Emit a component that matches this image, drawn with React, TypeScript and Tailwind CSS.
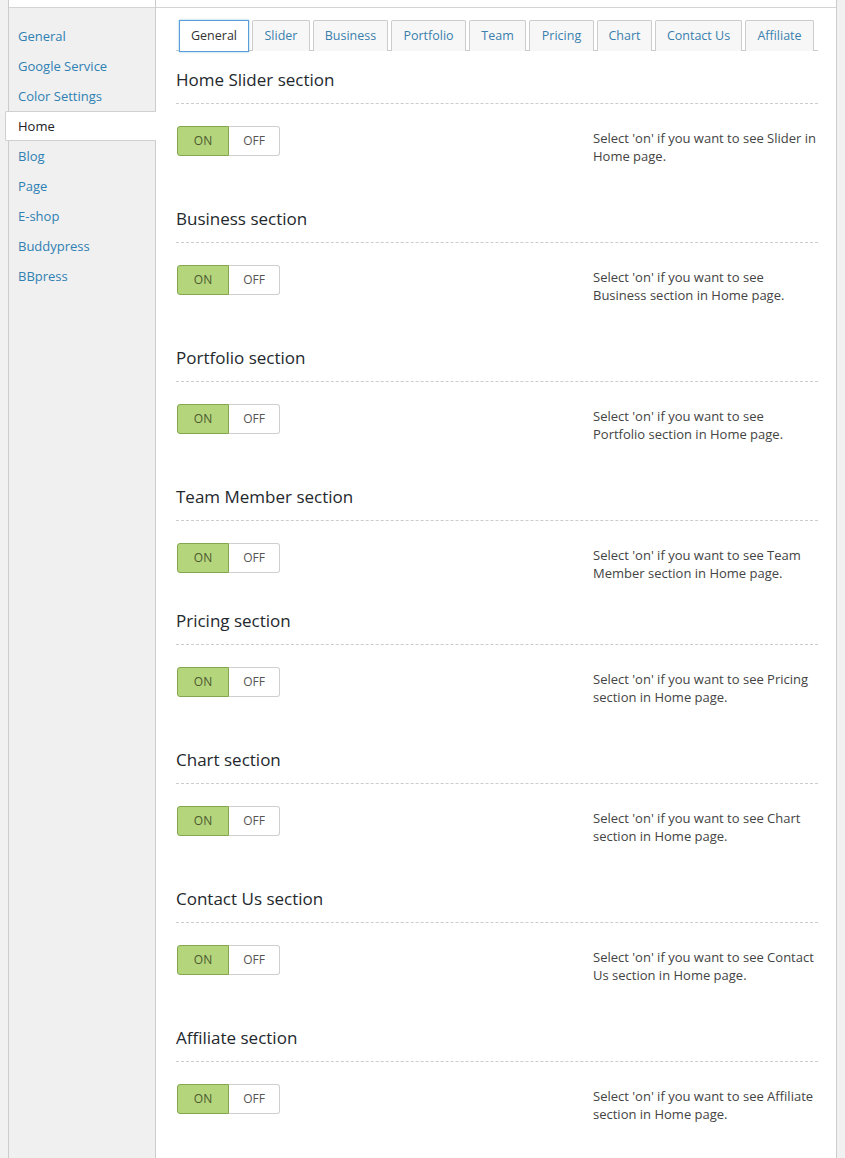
import React from 'react';

const menu = ['General', 'Google Service', 'Color Settings', 'Home', 'Blog', 'Page', 'E-shop', 'Buddypress', 'BBpress'];

const tabs = [
  { name: 'General', w: 'w-[70px]' },
  { name: 'Slider', w: 'w-[58px]' },
  { name: 'Business', w: 'w-[75px]' },
  { name: 'Portfolio', w: 'w-[75px]' },
  { name: 'Team', w: 'w-[57px]' },
  { name: 'Pricing', w: 'w-[65px]' },
  { name: 'Chart', w: 'w-[55px]' },
  { name: 'Contact Us', w: 'w-[87px]' },
  { name: 'Affiliate', w: 'w-[69px]' },
];

const sections = [
  { title: 'Home Slider section', lines: ["Select 'on' if you want to see Slider in", 'Home page.'] },
  { title: 'Business section', lines: ["Select 'on' if you want to see", 'Business section in Home page.'] },
  { title: 'Portfolio section', lines: ["Select 'on' if you want to see", 'Portfolio section in Home page.'] },
  { title: 'Team Member section', lines: ["Select 'on' if you want to see Team", 'Member section in Home page.'], tight: true },
  { title: 'Pricing section', lines: ["Select 'on' if you want to see Pricing", 'section in Home page.'] },
  { title: 'Chart section', lines: ["Select 'on' if you want to see Chart", 'section in Home page.'] },
  { title: 'Contact Us section', lines: ["Select 'on' if you want to see Contact", 'Us section in Home page.'] },
  { title: 'Affiliate section', lines: ["Select 'on' if you want to see Affiliate", 'section in Home page.'] },
];

function Toggle() {
  return (
    <div className="ml-px flex h-[30px] text-[12px]">
      <div className="flex w-[52px] items-center justify-center rounded-l-[3px] border border-[#84a64c] bg-[#b5d57d] text-[#4b5a2f]">
        ON
      </div>
      <div className="flex w-[51px] items-center justify-center rounded-r-[3px] border border-l-0 border-[#cfcfcf] bg-white text-[#555]">
        OFF
      </div>
    </div>
  );
}

export default function App() {
  return (
    <div className="flex h-[1158px] overflow-hidden bg-[#f1f1f1] font-['Open_Sans',sans-serif]">
      <div className="ml-[8px] flex w-[829px] border-x border-[#cccccc] bg-white">
        {/* left menu */}
        <div className="flex w-[147px] shrink-0 flex-col border-r border-[#cccccc]">
          <div className="h-[8px] shrink-0 border-b border-[#d4d4d4] bg-white" />
          <div className="flex-1 bg-[#f0f0f0] pt-[13px] text-[13px]">
            {menu.map((m) =>
              m === 'Home' ? (
                <div
                  key={m}
                  className="-ml-[4px] -mr-px h-[30px] rounded-l-[2px] border border-r-0 border-[#d0d0d0] bg-white pl-[12px] leading-[28px] text-[#222]"
                >
                  {m}
                </div>
              ) : (
                <div key={m} className="h-[30px] pl-[9px] leading-[30px] text-[#2f80b3]">
                  {m}
                </div>
              )
            )}
          </div>
        </div>

        {/* main panel */}
        <div className="flex flex-1 flex-col">
          <div className="h-[8px] shrink-0 border-b border-[#d4d4d4]" />
          <div className="pl-[20px] pr-[18px] pt-[12px]">
            <div className="flex h-[31px] gap-[3px] border-b border-[#cccccc] pl-[3px]">
              {tabs.map((t, i) =>
                i === 0 ? (
                  <div
                    key={t.name}
                    className={`${t.w} -mb-px flex h-[32px] items-center justify-center border border-[#5b9dd9] bg-white text-[12.5px] text-[#333] shadow-[0_0_2px_rgba(30,140,190,0.5)]`}
                  >
                    {t.name}
                  </div>
                ) : (
                  <div
                    key={t.name}
                    className={`${t.w} flex h-[31px] items-center justify-center rounded-t-[2px] border border-b-0 border-[#cccccc] bg-[#f7f7f7] text-[12.5px] text-[#3a7fae]`}
                  >
                    {t.name}
                  </div>
                )
              )}
            </div>

            <div className="mt-[17px]">
              {sections.map((s) => (
                <div key={s.title} className={s.tight ? 'pb-[27px]' : 'pb-[42px]'}>
                  <h3 className="border-b border-dashed border-[#cccccc] pb-[11px] text-[17px] leading-[24px] text-[#23282d]">
                    {s.title}
                  </h3>
                  <div className="mt-[22px] flex items-start justify-between">
                    <Toggle />
                    <div className="mt-[3px] w-[225px] text-[13px] leading-[18px] text-[#444]">
                      {s.lines.map((l) => (
                        <div key={l} className="whitespace-nowrap">
                          {l}
                        </div>
                      ))}
                    </div>
                  </div>
                </div>
              ))}
            </div>
          </div>
        </div>
      </div>
    </div>
  );
}
